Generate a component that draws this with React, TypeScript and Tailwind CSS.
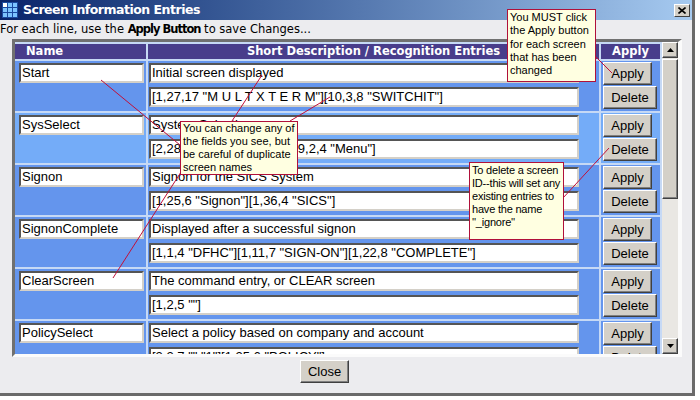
import React from "react";

const rows = [
  { name: "Start", d1: "Initial screen displayed", d2: '[1,27,17 "M U L T X T E R M"][10,3,8 "SWITCHIT"]', light: false },
  { name: "SysSelect", d1: "System Selection", d2: '[2,28,10,10 "SYSTEM"][19,2,4 "Menu"]', light: true },
  { name: "Signon", d1: "Signon for the SICS System", d2: '[1,25,6 "Signon"][1,36,4 "SICS"]', light: false },
  { name: "SignonComplete", d1: "Displayed after a successful signon", d2: '[1,1,4 "DFHC"][1,11,7 "SIGN-ON"][1,22,8 "COMPLETE"]', light: false },
  { name: "ClearScreen", d1: "The command entry, or CLEAR screen", d2: '[1,2,5 ""]', light: false },
  { name: "PolicySelect", d1: "Select a policy based on company and account", d2: '[2,2,7 "","1"][1,25,6 "POLICY"]', light: false },
];

const sans = "font-['Liberation_Sans',Arial,sans-serif]";

function Field({ text, w }: { text: string; w: string }) {
  return (
    <div
      className={`${w} h-[20px] bg-white border-2 border-t-[#555555] border-l-[#555555] border-r-[#d4d0c8] border-b-[#d4d0c8] pl-[1px] flex items-center overflow-hidden whitespace-nowrap text-[13px] text-black ${sans}`}
    >
      {text}
    </div>
  );
}

function Btn({ label, w }: { label: string; w: string }) {
  return (
    <div
      className={`${w} h-[23px] bg-[#d4d0c8] border border-t-white border-l-white border-r-[#404040] border-b-[#404040] shadow-[inset_-1px_-1px_0_#808080] flex items-center justify-center text-[13px] text-black ${sans}`}
    >
      {label}
    </div>
  );
}

function Arrow({ up }: { up: boolean }) {
  return (
    <div className="w-[16px] h-[16px] bg-[#d4d0c8] border border-t-white border-l-white border-r-[#404040] border-b-[#404040] shadow-[inset_-1px_-1px_0_#808080] flex items-center justify-center shrink-0">
      <svg width="7" height="4" viewBox="0 0 7 4">
        {up ? <path d="M3.5 0 L7 4 L0 4 Z" fill="#000" /> : <path d="M0 0 L7 0 L3.5 4 Z" fill="#000" />}
      </svg>
    </div>
  );
}

export default function App() {
  return (
    <div className="relative w-[700px] h-[400px] bg-white overflow-hidden">
      <div className="w-[695px] h-[396px] bg-[#ececef] border-r-[3px] border-b-[3px] border-[#6a6a6a] flex flex-col">
        {/* Title bar */}
        <div className="h-[20px] shrink-0 flex items-center bg-gradient-to-r from-[#0a246a] to-[#a6caf0]">
          <svg width="16" height="16" viewBox="0 0 16 16" className="ml-[2px] shrink-0">
            <rect x="0" y="0" width="16" height="16" fill="#1a4aa0" />
            {[0, 1, 2].map((r) =>
              [0, 1, 2].map((c) => (
                <rect key={`${r}-${c}`} x={1 + c * 5} y={1 + r * 5} width="4" height="4" fill={r === 0 && c === 0 ? "#ffffff" : "#7cc4ff"} />
              ))
            )}
          </svg>
          <div className="ml-[5px] text-white font-bold text-[12.5px] tracking-[-0.5px] font-['DejaVu_Sans',Verdana,sans-serif] whitespace-nowrap">
            Screen Information Entries
          </div>
          <div className="ml-auto mr-[2px] w-[16px] h-[13px] bg-[#d4d0c8] border border-t-white border-l-white border-r-[#404040] border-b-[#404040] flex items-center justify-center">
            <svg width="8" height="7" viewBox="0 0 8 7">
              <path d="M0.5 0.5 L7.5 6.5 M7.5 0.5 L0.5 6.5" stroke="#000" strokeWidth="1.6" />
            </svg>
          </div>
        </div>

        {/* Subtitle */}
        <div className="h-[19px] shrink-0 flex items-center text-[11.5px] text-black font-['DejaVu_Sans',Verdana,sans-serif] whitespace-nowrap">
          <span>For each line, use the&nbsp;</span>
          <span className="font-bold tracking-[-1px]">Apply Button</span>
          <span>&nbsp;to save Changes...</span>
        </div>

        {/* Panel */}
        <div className="ml-[12px] w-[670px] h-[318px] shrink-0 border-t-[3px] border-l-[3px] border-r-[4px] border-b-[3px] border-t-[#707070] border-l-[#707070] border-r-[#fbfbfb] border-b-[#fbfbfb] bg-[#c6d9f5] flex">
          <div className="w-[645px] h-[312px] overflow-hidden flex flex-col pt-[2px] gap-[2px]">
            <div className="h-[15px] shrink-0 flex gap-[2px] text-white font-bold text-[11.5px] font-['DejaVu_Sans',Verdana,sans-serif]">
              <div className="w-[131px] bg-[#483d8b] pl-[11px] flex items-center">Name</div>
              <div className="w-[451px] bg-[#483d8b] flex items-center justify-center">Short Description / Recognition Entries</div>
              <div className="w-[59px] bg-[#483d8b] flex items-center justify-center">Apply</div>
            </div>
            {rows.map((r) => {
              const bg = r.light ? "bg-[#74acf8]" : "bg-[#6495ed]";
              return (
                <div key={r.name} className="h-[50px] shrink-0 flex gap-[2px]">
                  <div className={`w-[131px] ${bg} pl-[4px] pt-[2px]`}>
                    <Field text={r.name} w="w-[125px]" />
                  </div>
                  <div className={`w-[451px] ${bg} pl-[1px] pt-[2px] flex flex-col gap-[4px]`}>
                    <Field text={r.d1} w="w-[430px]" />
                    <Field text={r.d2} w="w-[430px]" />
                  </div>
                  <div className={`w-[59px] ${bg} pl-[2px] pt-[1px] flex flex-col gap-[1px]`}>
                    <Btn label="Apply" w="w-[49px]" />
                    <Btn label="Delete" w="w-[54px]" />
                  </div>
                </div>
              );
            })}
          </div>
          <div className="ml-[2px] w-[16px] h-[312px] flex flex-col bg-[#e9e7e3]">
            <Arrow up />
            <div className="flex-1 flex flex-col">
              <div className="mt-[1px] h-[140px] bg-[#d4d0c8] border border-t-white border-l-white border-r-[#404040] border-b-[#404040] shadow-[inset_-1px_-1px_0_#808080]" />
            </div>
            <Arrow up={false} />
          </div>
        </div>

        {/* Close */}
        <div className="mt-[3px] ml-[300px]">
          <Btn label="Close" w="w-[49px]" />
        </div>
      </div>

      {/* Annotation lines */}
      <svg className="absolute left-0 top-0 pointer-events-none" width="700" height="400" viewBox="0 0 700 400">
        <g stroke="#c0103a" strokeWidth="1" fill="none">
          <line x1="101" y1="80" x2="180" y2="145" />
          <line x1="262" y1="75" x2="232" y2="121" />
          <line x1="330" y1="97" x2="290" y2="121" />
          <line x1="113" y1="278" x2="181" y2="172" />
          <line x1="595" y1="56" x2="612" y2="73" />
          <line x1="563" y1="198" x2="609" y2="148" />
        </g>
      </svg>

      {/* Tooltips */}
      <div className={`absolute left-[507px] top-[9px] w-[89px] h-[73px] bg-[#ffffe1] border border-[#b0103a] pl-[2px] pt-[1px] whitespace-nowrap text-[11px] leading-[13.3px] text-black ${sans}`}>
        You MUST click
        <br />
        the Apply button
        <br />
        for each screen
        <br />
        that has been
        <br />
        changed
      </div>
      <div className={`absolute left-[180px] top-[121px] w-[118px] h-[54px] bg-[#ffffe1] border border-[#b0103a] pl-[2px] whitespace-nowrap text-[11px] leading-[13px] text-black ${sans}`}>
        You can change any of
        <br />
        the fields you see, but
        <br />
        be careful of duplicate
        <br />
        screen names
      </div>
      <div className={`absolute left-[469px] top-[162px] w-[95px] h-[78px] bg-[#ffffe1] border border-[#b0103a] pl-[2px] pt-[1px] whitespace-nowrap text-[11px] leading-[13px] tracking-[-0.2px] text-black ${sans}`}>
        To delete a screen
        <br />
        ID--this will set any
        <br />
        existing entries to
        <br />
        have the name
        <br />
        ''_ignore''
      </div>
    </div>
  );
}
